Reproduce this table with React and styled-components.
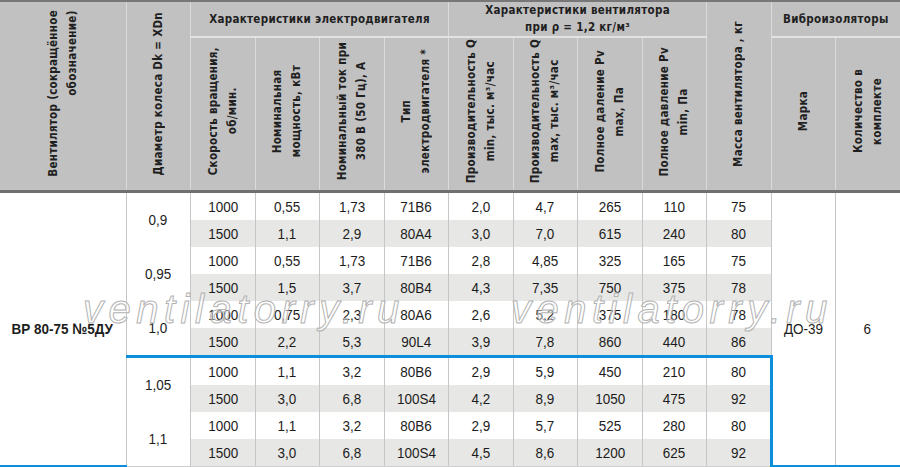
import React from "react";
import styled, { createGlobalStyle } from "styled-components";

const GlobalStyle = createGlobalStyle`
  body {
    margin: 0;
    background: #ffffff;
  }
`;

const HEAD_FONT = `"DejaVu Sans Condensed", "Liberation Sans", sans-serif`;
const BODY_FONT = `"Liberation Sans", Arial, sans-serif`;
const BLUE = "#0b8fdc";

const Wrapper = styled.div`
  position: relative;
  width: 900px;
  height: 467px;
  overflow: hidden;
`;

const Table = styled.table`
  width: 900px;
  table-layout: fixed;
  border-collapse: collapse;
  border-spacing: 0;
`;

const HeadCell = styled.th`
  height: ${({ $h }) => $h}px;
  padding: 0;
  background: #c1c1c1;
  color: #1f1f1f;
  font: 700 11.5px ${HEAD_FONT};
  letter-spacing: 0.3px;
  line-height: 17px;
  text-align: center;
  vertical-align: middle;
  border-left: 1px solid #dadada;
  border-right: 1px solid #dadada;
  border-top: ${({ $top }) => ($top ? "2px solid #777" : "2px solid #e2e2e2")};
  border-bottom: ${({ $bottom }) =>
    $bottom ? "3px solid #6f6f6f" : "2px solid #e2e2e2"};
  &:first-child {
    border-left: none;
  }
  &:last-child {
    border-right: none;
  }
`;

const Vertical = styled.div`
  display: inline-block;
  writing-mode: vertical-rl;
  transform: rotate(180deg);
  text-align: ${({ $align }) => $align || "center"};
  line-height: 19px;
  white-space: nowrap;
`;

const Cell = styled.td`
  height: 27px;
  padding: 0;
  text-align: center;
  vertical-align: middle;
  font: ${({ $bold }) => ($bold ? 700 : 400)} 15.5px ${BODY_FONT};
  line-height: 20px;
  color: #1c1c1c;
  background: ${({ $shade }) => ($shade ? "#e7e7e5" : "#ffffff")};
  border-left: 1px solid #c6c6c6;
  border-right: 1px solid #c6c6c6;
  border-top: ${({ $blueTop }) => ($blueTop ? `3px solid ${BLUE}` : "none")};
  border-bottom: ${({ $blueBottom, $last }) =>
    $blueBottom ? `3px solid ${BLUE}` : $last ? "1px solid #cfcfcf" : "none"};
  ${({ $blueLeft }) => $blueLeft && `border-left: 3px solid ${BLUE};`}
  ${({ $blueRight }) => $blueRight && `border-right: 3px solid ${BLUE};`}
  &:first-child {
    border-left: none;
  }
`;

// narrow the face, like a condensed grotesque
const Value = styled.span`
  display: inline-block;
  transform: scaleX(0.87);
  white-space: nowrap;
`;

const Watermark = styled.span`
  position: absolute;
  top: ${({ $top }) => $top}px;
  left: ${({ $left }) => $left}px;
  font: italic 300 40px "Liberation Sans", sans-serif;
  line-height: 1;
  letter-spacing: 5.5px;
  color: rgba(255, 255, 255, 0.45);
  -webkit-text-stroke: 1px #b3b3b3;
  pointer-events: none;
  white-space: nowrap;
`;

const rows = [
  ["1000", "0,55", "1,73", "71B6", "2,0", "4,7", "265", "110", "75"],
  ["1500", "1,1", "2,9", "80A4", "3,0", "7,0", "615", "240", "80"],
  ["1000", "0,55", "1,73", "71B6", "2,8", "4,85", "325", "165", "75"],
  ["1500", "1,5", "3,7", "80B4", "4,3", "7,35", "750", "375", "78"],
  ["1000", "0,75", "2,3", "80A6", "2,6", "5,2", "375", "180", "78"],
  ["1500", "2,2", "5,3", "90L4", "3,9", "7,8", "860", "440", "86"],
  ["1000", "1,1", "3,2", "80B6", "2,9", "5,9", "450", "210", "80"],
  ["1500", "3,0", "6,8", "100S4", "4,2", "8,9", "1050", "475", "92"],
  ["1000", "1,1", "3,2", "80B6", "2,9", "5,7", "525", "280", "80"],
  ["1500", "3,0", "6,8", "100S4", "4,5", "8,6", "1200", "625", "92"],
];

const diameters = ["0,9", "0,95", "1,0", "1,05", "1,1"];

// rows from this index on are framed in blue
const FRAME_FROM = 6;

const subHeads = [
  ["Скорость вращения,", "об/мин."],
  ["Номинальная", "мощность, кВт"],
  ["Номинальный ток при", "380 В (50 Гц), А"],
  ["Тип", "электродвигателя *"],
  ["Производительность Q", "min, тыс. м³/час"],
  ["Производительность Q", "max, тыс. м³/час"],
  ["Полное даление Pv", "max, Па"],
  ["Полное давление Pv", "min, Па"],
];

const Lines = ({ lines, align }) => (
  <Vertical $align={align}>
    {lines.map((l, i) => (
      <React.Fragment key={i}>
        {i > 0 && <br />}
        {l}
      </React.Fragment>
    ))}
  </Vertical>
);

export default function App() {
  const last = rows.length - 1;
  return (
    <Wrapper>
      <GlobalStyle />
      <Table>
        <colgroup>
          <col style={{ width: 126 }} />
          {Array.from({ length: 12 }).map((_, i) => (
            <col key={i} style={{ width: 64.5 }} />
          ))}
        </colgroup>
        <thead>
          <tr>
            <HeadCell rowSpan={2} $h={44} $top $bottom>
              <Lines lines={["Вентилятор (сокращённое", "обозначение)"]} align="end" />
            </HeadCell>
            <HeadCell rowSpan={2} $top $bottom>
              <Lines lines={["Диаметр колеса Dk = XDn"]} />
            </HeadCell>
            <HeadCell colSpan={4} $top>
              Характеристики электродвигателя
            </HeadCell>
            <HeadCell colSpan={4} $top>
              Характеристики вентилятора
              <br />
              при ρ = 1,2 кг/м³
            </HeadCell>
            <HeadCell rowSpan={2} $top $bottom>
              <Lines lines={["Масса вентилятора , кг"]} />
            </HeadCell>
            <HeadCell colSpan={2} $top>
              Виброизоляторы
            </HeadCell>
          </tr>
          <tr>
            {subHeads.map((lines, i) => (
              <HeadCell key={i} $h={152} $bottom>
                <Lines lines={lines} />
              </HeadCell>
            ))}
            <HeadCell $h={152} $bottom>
              <Lines lines={["Марка"]} />
            </HeadCell>
            <HeadCell $h={152} $bottom>
              <Lines lines={["Количество в", "комплекте"]} />
            </HeadCell>
          </tr>
        </thead>
        <tbody>
          {rows.map((row, r) => {
            const framed = r >= FRAME_FROM;
            const top = r === FRAME_FROM;
            const shade = r % 2 === 1;
            return (
              <tr key={r}>
                {r === 0 && (
                  <Cell rowSpan={rows.length} $bold $blueBottom>
                    <Value>ВР 80-75 №5ДУ</Value>
                  </Cell>
                )}
                {r % 2 === 0 && (
                  <Cell
                    rowSpan={2}
                    $blueTop={top}
                    $blueLeft={framed}
                    $last={r + 1 === last}
                  >
                    <Value>{diameters[r / 2]}</Value>
                  </Cell>
                )}
                {row.map((v, c) => (
                  <Cell
                    key={c}
                    $shade={shade}
                    $blueTop={top}
                    $blueRight={framed && c === row.length - 1}
                    $last={r === last}
                  >
                    <Value>{v}</Value>
                  </Cell>
                ))}
                {r === 0 && (
                  <>
                    <Cell rowSpan={rows.length} $blueBottom>
                      <Value>ДО-39</Value>
                    </Cell>
                    <Cell rowSpan={rows.length} $blueBottom>
                      <Value>6</Value>
                    </Cell>
                  </>
                )}
              </tr>
            );
          })}
        </tbody>
      </Table>
      <Watermark $top={289} $left={83}>
        ventilatorry.ru
      </Watermark>
      <Watermark $top={289} $left={511}>
        ventilatorry.ru
      </Watermark>
    </Wrapper>
  );
}
